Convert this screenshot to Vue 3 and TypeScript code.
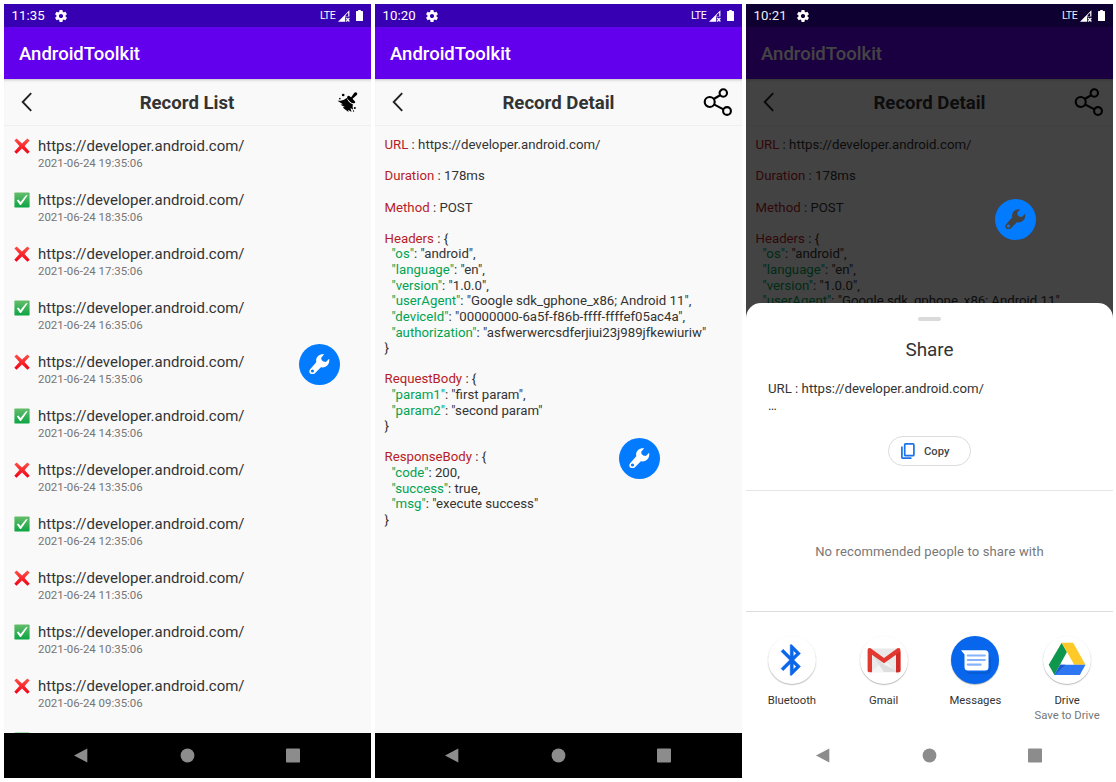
<script setup lang="ts">
interface LogRecord {
  ok: boolean
  time: string
}

interface DetailLine {
  title?: string
  key?: string
  text: string
}

interface Phone {
  id: string
  clock: string
  title: string
  kind: 'list' | 'detail' | 'share'
}

const phones: Phone[] = [
  { id: 'list', clock: '11:35', title: 'Record List', kind: 'list' },
  { id: 'detail', clock: '10:20', title: 'Record Detail', kind: 'detail' },
  { id: 'share', clock: '10:21', title: 'Record Detail', kind: 'share' },
]

const url = 'https://developer.android.com/'

const records: LogRecord[] = Array.from({ length: 12 }, (_, i) => ({
  ok: i % 2 === 1,
  time: `2021-06-24 ${String(19 - i).padStart(2, '0')}:35:06`,
}))

const lines: DetailLine[] = [
  { title: 'URL', text: ` : ${url}` },
  { text: '' },
  { title: 'Duration', text: ' : 178ms' },
  { text: '' },
  { title: 'Method', text: ' : POST' },
  { text: '' },
  { title: 'Headers', text: ' : {' },
  { key: '"os"', text: ': "android",' },
  { key: '"language"', text: ': "en",' },
  { key: '"version"', text: ': "1.0.0",' },
  { key: '"userAgent"', text: ': "Google sdk_gphone_x86; Android 11",' },
  { key: '"deviceId"', text: ': "00000000-6a5f-f86b-ffff-ffffef05ac4a",' },
  { key: '"authorization"', text: ': "asfwerwercsdferjiui23j989jfkewiuriw"' },
  { text: '}' },
  { text: '' },
  { title: 'RequestBody', text: ' : {' },
  { key: '"param1"', text: ': "first param",' },
  { key: '"param2"', text: ': "second param"' },
  { text: '}' },
  { text: '' },
  { title: 'ResponseBody', text: ' : {' },
  { key: '"code"', text: ': 200,' },
  { key: '"success"', text: ': true,' },
  { key: '"msg"', text: ': "execute success"' },
  { text: '}' },
]

const targets = [
  { id: 'bluetooth', name: 'Bluetooth', note: '' },
  { id: 'gmail', name: 'Gmail', note: '' },
  { id: 'messages', name: 'Messages', note: '' },
  { id: 'drive', name: 'Drive', note: 'Save to Drive' },
]
</script>

<template>
  <main class="board">
    <section v-for="p in phones" :key="p.id" class="phone" :class="p.kind">
      <div class="status">
        <div class="status-row">
          <span class="clock">{{ p.clock }}</span>
          <svg class="gear" viewBox="2 2 20 20">
            <path d="M19.43 12.98c.04-.32.07-.64.07-.98s-.03-.66-.07-.98l2.11-1.65c.19-.15.24-.42.12-.64l-2-3.46c-.12-.22-.39-.3-.61-.22l-2.49 1c-.52-.4-1.08-.73-1.69-.98l-.38-2.65C14.46 2.18 14.25 2 14 2h-4c-.25 0-.46.18-.49.42l-.38 2.65c-.61.25-1.17.59-1.69.98l-2.49-1c-.23-.09-.49 0-.61.22l-2 3.46c-.13.22-.07.49.12.64l2.11 1.65c-.04.32-.07.65-.07.98s.03.66.07.98l-2.11 1.65c-.19.15-.24.42-.12.64l2 3.46c.12.22.39.3.61.22l2.49-1c.52.4 1.08.73 1.69.98l.38 2.65c.03.24.24.42.49.42h4c.25 0 .46-.18.49-.42l.38-2.65c.61-.25 1.17-.59 1.69-.98l2.49 1c.23.09.49 0 .61-.22l2-3.46c.12-.22.07-.49-.12-.64l-2.11-1.65zM12 15.5c-1.93 0-3.5-1.57-3.5-3.5s1.57-3.5 3.5-3.5 3.5 1.57 3.5 3.5-1.57 3.5-3.5 3.5z" />
          </svg>
          <span class="lte">LTE</span>
          <svg class="signal" viewBox="0 0 12 12">
            <path d="M0 11.7 11.4.3V6.4H7.2v5.3Z" fill="#fff" />
            <path d="M7.6 6.3V5.2l2.6-2.6v3.7Z" class="signal-off" />
            <path d="m8.2 8 3.2 3.5m0-3.5-3.2 3.5" stroke="#fff" stroke-width="1.2" />
          </svg>
          <svg class="battery" viewBox="0 0 7 11">
            <path d="M2.2 0h2.6v1.1H6.4q.6 0 .6.6v8.7q0 .6-.6.6H.6q-.6 0-.6-.6V1.7q0-.6.6-.6h1.6Z" fill="#fff" />
          </svg>
        </div>
      </div>
      <header class="appbar">AndroidToolkit</header>
      <div class="titlebar">
        <svg class="back" viewBox="0 0 12 20">
          <path d="M10.2 1.2 1.7 10l8.5 8.8" fill="none" stroke="#222" stroke-width="1.9" />
        </svg>
        <h1>{{ p.title }}</h1>
        <svg v-if="p.kind === 'list'" class="broom" viewBox="0 0 60 60">
          <path d="M50 3q4-4 8-1 3 4-1 8L45 20l8 9q1 5-4 5-6 0-11-5l-8-8q-3-6 1-9 4-2 7 2l3 2Z" />
          <path d="M28 18q3 13 18 19-2 10 1 16l-8-5 3 12-10-7 1 7-13-10-4-4 6-1-13-7 7-1L0 26l10 0q10-1 18-8Z" />
          <circle cx="17" cy="9" r="4" /><circle cx="7" cy="20" r="2.4" />
          <circle cx="52" cy="48" r="3.2" /><circle cx="48" cy="57" r="2" />
        </svg>
        <svg v-else class="share-icon" viewBox="0 0 30 30">
          <g fill="none" stroke="#000" stroke-width="2.1">
            <circle cx="6.7" cy="15" r="5" />
            <circle cx="20.3" cy="6" r="3.7" />
            <circle cx="24" cy="24" r="3.9" />
            <path d="m10.7 12 6.8-4M10.9 17.4l9.6 5" />
          </g>
        </svg>
      </div>

      <ul v-if="p.kind === 'list'" class="records">
        <li v-for="r in records" :key="r.time">
          <svg v-if="r.ok" class="mark" viewBox="0 0 16 16">
            <defs>
              <linearGradient id="leaf" x1="0" y1="0" x2="0" y2="1">
                <stop offset="0" stop-color="#66bd6b" /><stop offset="1" stop-color="#0ca543" />
              </linearGradient>
            </defs>
            <rect x=".4" y=".4" width="15.2" height="15.2" rx=".8" fill="url(#leaf)" />
            <path d="m2.8 8.3 1.6-.9 2.1 2.7L12 3.2h1.7L7 13H6Z" fill="#fff" />
          </svg>
          <svg v-else class="mark" viewBox="0 0 16 16">
            <defs>
              <linearGradient id="flame" x1="0" y1="0" x2="0" y2="1">
                <stop offset="0" stop-color="#ff5148" /><stop offset="1" stop-color="#f20016" />
              </linearGradient>
            </defs>
            <path d="M2.6.4 8 5.5 13.4.4l2.2 2L10.6 8l5.1 5.8-2.2 1.9L8 10.6l-5.5 5.1-2.2-1.9L5.4 8 .4 2.4Z" fill="url(#flame)" />
          </svg>
          <div>
            <p class="link">{{ url }}</p>
            <p class="time">{{ r.time }}</p>
          </div>
        </li>
      </ul>
      <div v-else class="detail-text">
        <div v-for="(l, i) in lines" :key="i" class="line" :class="{ nested: l.key }"><span v-if="l.title" class="name">{{ l.title }}</span><span v-if="l.key" class="key">{{ l.key }}</span>{{ l.text }}</div>
      </div>

      <div v-if="p.kind === 'share'" class="scrim"></div>
      <div class="fab">
        <svg viewBox="0 0 62 62">
          <path fill-rule="evenodd" d="M46 1C31-1 19 9 22 25L4 45c-5 6-3 12 0 14 4 4 10 3 14-1l18-18c14 3 28-8 25-26L51 24l-8-1-5-5-1-7ZM10.500 56.200a4.700 4.700 0 1 1 0-9.400 4.700 4.700 0 0 1 0 9.400Z" />
        </svg>
      </div>

      <div v-if="p.kind === 'share'" class="sheet">
        <div class="grip"></div>
        <h2>Share</h2>
        <p class="preview">URL : {{ url }}<br />…</p>
        <button class="copy">
          <svg viewBox="0 0 14 16">
            <rect x="3.7" y=".9" width="9.2" height="11.8" rx="1" />
            <path d="M.9 3.6v10.6q0 1 1 1h8.6" />
          </svg>
          Copy
        </button>
        <div class="people">No recommended people to share with</div>
        <div class="targets">
          <div v-for="t in targets" :key="t.id" class="target">
            <div class="disc" :class="t.id">
              <svg v-if="t.id === 'bluetooth'" viewBox="0 0 48 48">
                <path transform="translate(5.4 5.6) scale(1.53)" fill="#0b66ea" stroke="#0b66ea" stroke-width=".3" d="M17.71 7.71L12 2h-1v7.59L6.41 5 5 6.41 10.59 12 5 17.59 6.41 19 11 14.41V22h1l5.71-5.71-4.3-4.29 4.3-4.29zM13 5.83l1.88 1.88L13 9.59V5.83zm1.88 10.46L13 18.17v-3.76l1.88 1.88z" />
              </svg>
              <svg v-else-if="t.id === 'gmail'" viewBox="0 0 48 48">
                <path d="M8 12.5h32v23.7H8Z" fill="#e9e9e9" />
                <path d="M11 36.2 24 24l13 12.2Z" fill="#f4f4f4" />
                <path d="m11 17 13 11.5L40 36H24Z" fill="#dedede" />
                <path d="M7.6 14.2q0-2 2-2.1 1 0 2 .8L24 22l12.400-9.100q1-.8 2-.8 2 .1 2 2.100v20.600q0 1.400-1.400 1.400h-3V18.700L24 27.200l-12-8.500v17.500H9q-1.400 0-1.400-1.400Z" fill="#e2382f" />
                <path d="M36 18.7v17.500h3q1.400 0 1.400-1.400V15.500Z" fill="#cf2a27" />
              </svg>
              <svg v-else-if="t.id === 'messages'" viewBox="0 0 48 48">
                <path d="m14 33 3 3h17q4 0 4-4V19l2 3v11q0 5-5 5H19q-4 0-5-5Z" fill="#0855c8" opacity=".6" />
                <path d="M10 14.200h24q3.500 0 3.500 3.500v13.200q0 3.500-3.500 3.500H17q-3.500 0-3.500-3.500V18.400Z" fill="#fff" />
                <path d="M16.800 19.500h17M16.800 24h17M16.800 28.600h12.800" stroke="#86b4fb" stroke-width="2.200" stroke-linecap="round" />
              </svg>
              <svg v-else viewBox="0 0 48 48">
                <path d="m18.700 6.700 5.200 9.300-12.500 23L5.700 28.800Z" fill="#0d964c" />
                <path d="M18.700 6.700h11.400l12.400 22H31.200Z" fill="#ffc928" />
                <path d="M17.300 28.700h25.200l-5.700 10.200H11.400Z" fill="#2f77f2" />
                <path d="M17.300 28.700h5.200L11.400 38.900Z" fill="#1d5bc6" />
              </svg>
            </div>
            <span class="target-name">{{ t.name }}</span>
            <span class="target-note">{{ t.note }}</span>
          </div>
        </div>
      </div>

      <nav class="navbar">
        <svg viewBox="0 0 367 45">
          <path d="M83.3 15.600v13.800L70 22.500Z" />
          <circle cx="183.5" cy="22.5" r="6.9" />
          <rect x="282" y="15.6" width="14" height="14" rx=".8" />
        </svg>
      </nav>
    </section>
  </main>
</template>

<style>
body {
  margin: 0;
  background: #fff;
}
</style>

<style scoped>
.board {
  display: flex;
  gap: 4px;
  box-sizing: border-box;
  width: 1116px;
  height: 782px;
  padding: 4px;
  overflow: hidden;
  font-family: Roboto, 'Liberation Sans', sans-serif;
  color: #333;
}
.board p,
.board h1,
.board h2,
.board ul {
  margin: 0;
  padding: 0;
}
.board svg {
  display: block;
}
.phone {
  position: relative;
  display: flex;
  flex-direction: column;
  flex: 0 0 367px;
  height: 774px;
  overflow: hidden;
  background: #f9f9f9;
}
.status {
  flex: 0 0 auto;
  height: 22.5px;
  background: #3700b3;
}
.status-row {
  position: relative;
  z-index: 3;
  display: flex;
  align-items: center;
  height: 23px;
  padding: 0 8px 0 7.5px;
  color: #fff;
}
.share .status-row {
  color: #eee;
}
.clock {
  width: 43px;
  font-size: 13.2px;
  letter-spacing: 0.1px;
}
.gear {
  width: 12px;
  height: 12px;
  fill: #fff;
}
.lte {
  margin-left: auto;
  font-size: 10.6px;
  letter-spacing: -0.35px;
}
.signal {
  width: 12px;
  height: 12px;
  margin-left: 2.5px;
}
.signal-off {
  fill: #3700b3;
}
.share .signal-off {
  fill: #15002f;
}
.battery {
  width: 7px;
  height: 11px;
  margin-left: 6px;
}
.appbar {
  flex: 0 0 auto;
  height: 52.5px;
  box-sizing: border-box;
  padding-left: 15px;
  line-height: 54px;
  font-size: 18.5px;
  font-weight: 500;
  color: #fff;
  background: #6200ee;
}
.titlebar {
  display: flex;
  align-items: center;
  flex: 0 0 auto;
  height: 46.5px;
  box-sizing: border-box;
  padding: 0 9px 0 17px;
  border-bottom: 1px solid #efefef;
  box-shadow: inset 0 3px 3px -2px rgba(0, 0, 0, 0.22);
}
.back {
  width: 12px;
  height: 20px;
}
.titlebar h1 {
  flex: 1;
  padding-top: 2px;
  text-align: center;
  font-size: 18.6px;
  line-height: 22px;
  font-weight: 700;
}
.back + h1 {
  padding-left: 10px;
}
.list .titlebar {
  padding-right: 13px;
}
.list .back + h1 {
  padding-left: 4px;
}
.broom {
  width: 21px;
  height: 20px;
}
.share-icon {
  width: 30px;
  height: 30px;
}
.records {
  flex: 1 1 0;
  min-height: 0;
  overflow: hidden;
  list-style: none;
}
.records li {
  display: flex;
  gap: 8.5px;
  height: 54px;
  box-sizing: border-box;
  padding: 10px 10px 0 9.5px;
}
.mark {
  width: 16px;
  height: 16px;
  margin-top: 2px;
}
.link {
  font-size: 14.97px;
  line-height: 20px;
}
.time {
  padding-top: 1px;
  font-size: 11.45px;
  line-height: 14px;
  color: #757575;
}
.detail-text {
  flex: 1 1 0;
  min-height: 0;
  overflow: hidden;
  padding: 11.7px 9px 0 9.5px;
  font-size: 13.23px;
  line-height: 15.62px;
}
.line {
  height: 15.62px;
  white-space: pre;
}
.line.nested {
  padding-left: 7px;
}
.name {
  color: #b71c26;
}
.key {
  color: #00a352;
}
.scrim {
  position: absolute;
  z-index: 1;
  inset: 0;
  background: rgba(0, 0, 0, 0.735);
}
.fab {
  position: absolute;
  z-index: 2;
  left: 295.2px;
  top: 339.5px;
  display: flex;
  align-items: center;
  justify-content: center;
  width: 41px;
  height: 41px;
  border-radius: 50%;
  background: #037bff;
}
.detail .fab {
  left: 244.2px;
  top: 433.5px;
}
.share .fab {
  left: 249px;
  top: 194.5px;
}
.fab svg {
  width: 20.5px;
  height: 20.5px;
  fill: #fff;
}
.share .fab svg {
  fill: #424242;
}
.sheet {
  position: absolute;
  z-index: 4;
  left: 0;
  right: 0;
  top: 298.5px;
  bottom: 0;
  display: flex;
  flex-direction: column;
  align-items: center;
  background: #fff;
  border-radius: 15px 15px 0 0;
}
.grip {
  width: 23px;
  height: 4px;
  margin-top: 14.5px;
  border-radius: 2px;
  background: #dadada;
}
.sheet h2 {
  margin-top: 17px;
  font-size: 18.9px;
  line-height: 24px;
  font-weight: 400;
}
.sheet .preview {
  align-self: stretch;
  margin-top: 17.5px;
  padding-left: 22px;
  font-size: 13.23px;
  line-height: 17px;
}
.copy {
  display: flex;
  align-items: center;
  gap: 9px;
  box-sizing: border-box;
  width: 83px;
  height: 30px;
  margin-top: 22px;
  padding: 1px 0 0 12px;
  border: 1px solid #dcdcdc;
  border-radius: 15px;
  background: #fff;
  font: 500 11.2px Roboto, sans-serif;
  color: #444;
}
.copy svg {
  width: 14px;
  height: 16px;
  fill: none;
  stroke: #1a73e8;
  stroke-width: 1.7;
}
.people {
  align-self: stretch;
  box-sizing: border-box;
  height: 122px;
  margin-top: 24px;
  border-top: 1.5px solid #e4e4e4;
  border-bottom: 1px solid #dcdcdc;
  text-align: center;
  font-size: 13.05px;
  line-height: 121px;
  letter-spacing: 0.12px;
  color: #777;
}
.targets {
  display: flex;
  align-self: stretch;
  padding-top: 24px;
}
.target {
  display: flex;
  flex-direction: column;
  align-items: center;
  flex: 1;
}
.disc {
  width: 48px;
  height: 48px;
  border-radius: 50%;
  background: #fff;
  box-shadow: 0 0.8px 1.2px rgba(0, 0, 0, 0.35);
}
.disc.messages {
  background: #0766ec;
}
.target-name,
.target-note {
  font-size: 11.3px;
  line-height: 15px;
}
.target-name {
  margin-top: 9px;
}
.target-note {
  color: #777;
}
.navbar {
  position: relative;
  z-index: 5;
  flex: 0 0 45px;
  background: #000;
}
.navbar svg {
  width: 367px;
  height: 45px;
  fill: #8c8c8c;
}
.share .navbar {
  background: #fff;
}
</style>
